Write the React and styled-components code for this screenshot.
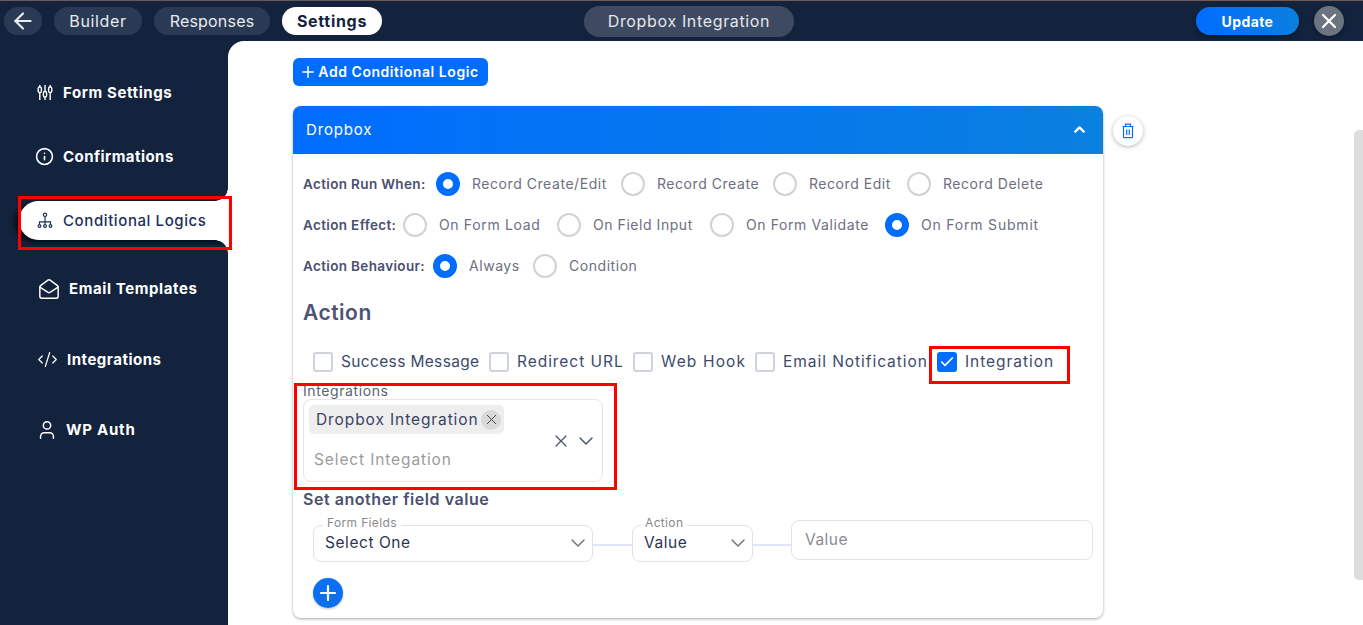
import React from "react";
import styled, { createGlobalStyle } from "styled-components";
import { ArrowLeft, X, Plus, ChevronUp, ChevronDown, Info, MailOpen, CodeXml, User, Check } from "lucide-react";

const Global = createGlobalStyle`
  html, body { margin: 0; padding: 0; height: 625px; overflow: hidden; background: #13233d; }
  * { box-sizing: border-box; }
  body { font-family: Inter, "Liberation Sans", sans-serif; }
`;
const Page = styled.div`display:flex;flex-direction:column;width:1363px;height:625px;background:#13233d;border-top:1px solid #6b5a5a;position:relative;overflow:hidden;`;
const TopBar = styled.header`height:40px;flex:none;display:flex;align-items:center;padding:0 19px 0 4px;`;
const Pill = styled.button`
  border:0;height:28px;border-radius:14px;padding:0;margin-right:12px;width:${p=>p.$w}px;flex:none;
  background:${p=>p.$active?"#fff":"#2a3a55"};color:${p=>p.$active?"#13233d":"#e8ebf0"};
  font:${p=>p.$active?700:400} 16px Inter,sans-serif;letter-spacing:${p=>p.$ls}px;
  display:flex;align-items:center;justify-content:center;
`;
const TitlePill = styled.div`margin-left:190px;width:210px;height:31px;flex:none;border-radius:16px;background:#3d4a61;color:#e4e7ec;font:400 16px Inter,sans-serif;letter-spacing:.65px;display:flex;align-items:center;justify-content:center;`;
const Right = styled.div`margin-left:auto;display:flex;align-items:center;gap:15px;`;
const Update = styled.button`border:0;width:103px;height:28px;border-radius:14px;background:linear-gradient(90deg,#016dff,#0a7fe0);color:#fff;font:700 14px Inter,sans-serif;letter-spacing:.4px;box-shadow:0 2px 5px rgba(0,0,0,.35);`;
const CloseBtn = styled.button`border:0;width:30px;height:30px;border-radius:50%;background:#6c7482;color:#fff;display:flex;align-items:center;justify-content:center;padding:0;box-shadow:0 1px 4px rgba(0,0,0,.4);`;
const Body = styled.div`flex:1;display:flex;min-height:0;`;
const Sidebar = styled.nav`width:228px;flex:none;display:flex;flex-direction:column;padding-top:32px;position:relative;z-index:2;background:#13233d;`;
const NavItem = styled.a`
  height:39px;flex:none;display:flex;align-items:center;position:relative;
  margin:${p=>p.$mt||0}px 0 0 ${p=>p.$active?19:0}px;
  padding-left:${p=>p.$pad-(p.$active?19:0)}px;gap:${p=>p.$gap}px;
  color:${p=>p.$active?"#1d2f5c":"#fff"};font:${p=>p.$active?500:700} 15px Inter,sans-serif;letter-spacing:${p=>p.$ls}px;
  ${p=>p.$active?`background:#fff;border-radius:20px 0 0 20px;box-shadow:-4px 2px 6px rgba(0,0,0,.8);
    &::before,&::after{content:"";position:absolute;right:0;width:13px;height:13px;}
    &::before{top:-13px;background:radial-gradient(circle at 0 0,transparent 12.5px,#fff 13px);}
    &::after{bottom:-13px;background:radial-gradient(circle at 0 100%,transparent 12.5px,#fff 13px);}
  `:""}
`;
const Main = styled.main`flex:1;background:#fff;border-top-left-radius:16px;padding:17px 0 0 65px;position:relative;min-width:0;`;
const AddBtn = styled.button`border:0;height:28px;width:195px;border-radius:6px;background:#016dff;color:#fff;font:600 14px/26px Inter,sans-serif;letter-spacing:.55px;display:flex;align-items:center;justify-content:center;gap:1px;padding:0 3px 0 0;`;
const CardRow = styled.div`display:flex;gap:10px;margin-top:20px;align-items:flex-start;`;
const Card = styled.section`width:810px;height:512px;border-radius:8px;background:#fff;box-shadow:0 1px 3px rgba(0,0,0,.35);`;
const CardHead = styled.div`height:48px;border-radius:8px 8px 0 0;background:linear-gradient(90deg,#016dff,#0a80df);color:#fff;display:flex;align-items:center;justify-content:space-between;padding:0 15px 2px 13px;font:400 15px Inter,sans-serif;letter-spacing:.85px;`;
const CardBody = styled.div`padding:18px 10px 0;`;
const OptRow = styled.div`display:flex;align-items:center;height:24px;margin-bottom:17px;`;
const OptLabel = styled.span`font:600 13.5px Inter,sans-serif;letter-spacing:.35px;color:#4a4f6e;width:${p=>p.$w}px;flex:none;margin-right:7px;white-space:nowrap;`;
const Radio = styled.span`width:24px;height:24px;flex:none;border-radius:50%;border:${p=>p.$on?"7.5px solid #016dff":"2px solid #d2d2d2"};background:#fff;`;
const OptText = styled.span`font:400 14px/20px Inter,sans-serif;color:#6e6f80;letter-spacing:${p=>p.$ls||.55}px;margin:0 16px 0 12px;white-space:nowrap;width:${p=>p.$w}px;flex:none;`;
const Heading = styled.h3`margin:19px 0 0;font:600 21px/32px Inter,sans-serif;letter-spacing:.5px;color:#4f5373;`;
const ChecksRow = styled.div`display:flex;align-items:center;height:24px;margin:21px 0 0 10px;`;
const Box = styled.span`width:20px;height:20px;flex:none;border-radius:3px;display:flex;align-items:center;justify-content:center;border:${p=>p.$on?"0":"2px solid #cfd3dc"};background:${p=>p.$on?"#016dff":"#fff"};color:#fff;`;
const CheckText = styled.span`font:400 15.5px/20px Inter,sans-serif;color:#3c4a6c;letter-spacing:${p=>p.$ls}px;margin:0 0 0 8px;width:${p=>p.$w}px;flex:none;white-space:nowrap;`;
const IntegField = styled.div`position:relative;margin-top:25px;width:300px;height:83px;border:1px solid #e5e5e5;border-radius:8px;display:flex;align-items:center;padding:0 4px 0 5px;`;
const FloatLabel = styled.span`position:absolute;top:${p=>p.$t}px;left:${p=>p.$x}px;background:#fff;padding:0 ${p=>p.$p||0}px;font:400 ${p=>p.$fs}px/14px Inter,sans-serif;color:${p=>p.$c||"#5d6176"};letter-spacing:${p=>p.$ls||.35}px;white-space:nowrap;`;
const FieldValues = styled.div`flex:1;align-self:flex-start;padding-top:5px;display:flex;flex-direction:column;align-items:flex-start;gap:16px;`;
const Chip = styled.div`width:195px;height:29px;border-radius:5px;background:#eee;display:flex;align-items:center;justify-content:space-between;padding:0 3px 0 7px;font:400 15.5px Inter,sans-serif;letter-spacing:.9px;color:#3a4263;white-space:nowrap;`;
const ChipX = styled.span`width:20px;height:20px;flex:none;border-radius:50%;background:#d9d9d9;color:#444;display:flex;align-items:center;justify-content:center;`;
const Placeholder = styled.span`margin-left:5px;font:400 15.5px/20px Inter,sans-serif;letter-spacing:.88px;color:#9b9b9b;white-space:nowrap;`;
const FieldIcons = styled.div`display:flex;align-items:center;gap:3px;color:#4a5573;`;
const SubHead = styled.h4`margin:7px 0 0;font:600 16px/20px Inter,sans-serif;letter-spacing:.55px;color:#4a4f6e;`;
const ValueRow = styled.div`display:flex;align-items:flex-start;margin:11px 0 0 10px;`;
const SelectBox = styled.div`position:relative;width:${p=>p.$w}px;height:37px;margin-top:5px;border:1px solid #e3e3e3;border-radius:8px;display:flex;align-items:center;justify-content:space-between;padding:0 2px 2px 11px;font:400 15.5px Inter,sans-serif;letter-spacing:.55px;color:#2d3454;flex:none;`;
const Connector = styled.span`width:${p=>p.$w}px;height:2px;flex:none;background:#dfe3fb;margin-top:24px;`;
const ValueInput = styled.div`width:302px;height:40px;flex:none;border:1px solid #e3e3e3;border-radius:8px;padding:0 0 1px 13px;display:flex;align-items:center;font:400 15.5px Inter,sans-serif;letter-spacing:.5px;color:#8a8a90;`;
const Round = styled.button`border:0;padding:0;width:30px;height:30px;border-radius:50%;margin:16px 0 0 10px;background:#0a70ef;color:#fff;display:flex;align-items:center;justify-content:center;box-shadow:0 1px 3px rgba(0,0,0,.25);`;
const Trash = styled.button`border:0;padding:0;width:30px;height:30px;border-radius:50%;margin-top:10px;background:#fff;color:#016dff;display:flex;align-items:center;justify-content:center;box-shadow:0 1px 4px rgba(0,0,0,.3);`;
const Scroll = styled.div`position:absolute;right:0;top:89px;width:9px;height:450px;border-radius:5px 0 0 5px;background:#ddd;`;
const Mark = styled.div`position:absolute;left:${p=>p.$x}px;top:${p=>p.$y}px;width:${p=>p.$w}px;height:${p=>p.$h}px;border:3px solid #f00;z-index:5;pointer-events:none;`;

const SlidersIcon = () => (
  <svg width="16" height="17" viewBox="0 0 16 17" fill="none" stroke="currentColor" strokeWidth="1.4">
    <path d="M2.8 1v2M2.8 8.5V16M8 1v6.5M8 13v3M13.2 1v2M13.2 8.5V16"/>
    <rect x="1.2" y="3" width="3.2" height="5.5" rx="1.6"/><rect x="6.4" y="7.5" width="3.2" height="5.5" rx="1.6"/><rect x="11.6" y="3" width="3.2" height="5.5" rx="1.6"/>
  </svg>
);
const TreeIcon = () => (
  <svg width="16" height="17" viewBox="0 0 16 17" fill="none" stroke="currentColor" strokeWidth="1.15">
    <circle cx="8" cy="2.8" r="1.7"/><path d="M8 4.5V10M2.5 12.5V9.8h11v2.7M8 10v2.5"/>
    <circle cx="2.5" cy="14" r="1.4"/><circle cx="8" cy="14" r="1.4"/><circle cx="13.5" cy="14" r="1.4"/>
  </svg>
);
const TrashIcon = () => (
  <svg width="14" height="16" viewBox="0 0 14 16" fill="none" stroke="currentColor" strokeWidth="1.2">
    <path d="M1.5 3.5h11M4.5 3.5V1.2h5v2.3M2.5 3.5v10.2a1 1 0 0 0 1 1h7a1 1 0 0 0 1-1V3.5M5.7 6.5v5.5M8.3 6.5v5.5"/>
  </svg>
);

const radios1=[["Record Create/Edit",1,133],["Record Create",0,100],["Record Edit",0,82],["Record Delete",0,100]];
const radios2=[["On Form Load",0,102,.65],["On Field Input",0,101],["On Form Validate",0,123,.6],["On Form Submit",1,120,.8]];
const radios3=[["Always",1,48],["Condition",0,68]];
const Opts=({items})=>items.map(([t,on,w,ls])=>(<React.Fragment key={t}><Radio $on={!!on}/><OptText $w={w} $ls={ls}>{t}</OptText></React.Fragment>));

export default function App(){
  return (<Page><Global/>
    <TopBar>
      <Pill $w={38} aria-label="back"><ArrowLeft size={26} strokeWidth={2}/></Pill>
      <Pill $w={88} $ls={.65}>Builder</Pill>
      <Pill $w={116} $ls={.2}>Responses</Pill>
      <Pill $w={100} $active $ls={.7}>Settings</Pill>
      <TitlePill>Dropbox Integration</TitlePill>
      <Right><Update>Update</Update><CloseBtn><X size={24} strokeWidth={2.2}/></CloseBtn></Right>
    </TopBar>
    <Body>
      <Sidebar>
        <NavItem $pad={37} $gap={10} $ls={.6}><SlidersIcon/>Form Settings</NavItem>
        <NavItem $mt={25} $pad={35} $gap={9} $ls={.45}><Info size={19} strokeWidth={2}/>Confirmations</NavItem>
        <NavItem $mt={25} $active $pad={37} $gap={10} $ls={.6}><TreeIcon/>Conditional Logics</NavItem>
        <NavItem $mt={29} $pad={38} $gap={9} $ls={.6}><MailOpen size={22} strokeWidth={1.6}/>Email Templates</NavItem>
        <NavItem $mt={32} $pad={37} $gap={9} $ls={.5}><CodeXml size={21} strokeWidth={1.4}/>Integrations</NavItem>
        <NavItem $mt={31} $pad={36} $gap={8} $ls={.75}><User size={22} strokeWidth={1.6}/>WP Auth</NavItem>
      </Sidebar>
      <Main>
        <AddBtn><Plus size={18} strokeWidth={2}/>Add Conditional Logic</AddBtn>
        <CardRow>
          <Card>
            <CardHead>Dropbox<ChevronUp size={17} strokeWidth={3.2}/></CardHead>
            <CardBody>
              <OptRow><OptLabel $w={126}>Action Run When:</OptLabel><Opts items={radios1}/></OptRow>
              <OptRow><OptLabel $w={93}>Action Effect:</OptLabel><Opts items={radios2}/></OptRow>
              <OptRow><OptLabel $w={123}>Action Behaviour:</OptLabel><Opts items={radios3}/></OptRow>
              <Heading>Action</Heading>
              <ChecksRow>
                <Box/><CheckText $w={148} $ls={.35}>Success Message</CheckText>
                <Box/><CheckText $w={116} $ls={.95}>Redirect URL</CheckText>
                <Box/><CheckText $w={94} $ls={1.15}>Web Hook</CheckText>
                <Box/><CheckText $w={154} $ls={.95}>Email Notification</CheckText>
                <Box $on><Check size={16} strokeWidth={2.6}/></Box><CheckText $w={90} $ls={.95}>Integration</CheckText>
              </ChecksRow>
              <IntegField>
                <FloatLabel $t={-16} $x={-1} $fs={14} $ls={.6}>Integrations</FloatLabel>
                <FieldValues>
                  <Chip>Dropbox Integration<ChipX><X size={17} strokeWidth={1.4}/></ChipX></Chip>
                  <Placeholder>Select Integation</Placeholder>
                </FieldValues>
                <FieldIcons><X size={20} strokeWidth={1.5}/><ChevronDown size={24} strokeWidth={1.5}/></FieldIcons>
              </IntegField>
              <SubHead>Set another field value</SubHead>
              <ValueRow>
                <SelectBox $w={280}><FloatLabel $t={-10} $x={9} $p={4} $fs={12} $c="#8a8a8a">Form Fields</FloatLabel>Select One<ChevronDown size={24} strokeWidth={1.5} color="#777"/></SelectBox>
                <Connector $w={39}/>
                <SelectBox $w={121}><FloatLabel $t={-10} $x={8} $p={4} $fs={12} $c="#8a8a8a">Action</FloatLabel>Value<ChevronDown size={24} strokeWidth={1.5} color="#777"/></SelectBox>
                <Connector $w={38}/>
                <ValueInput>Value</ValueInput>
              </ValueRow>
              <Round><Plus size={24} strokeWidth={2.2}/></Round>
            </CardBody>
          </Card>
          <Trash><TrashIcon/></Trash>
        </CardRow>
        <Scroll/>
      </Main>
    </Body>
    <Mark $x={18} $y={195} $w={214} $h={54}/>
    <Mark $x={929} $y={345} $w={141} $h={38}/>
    <Mark $x={294} $y={382} $w={323} $h={107}/>
  </Page>);
}
